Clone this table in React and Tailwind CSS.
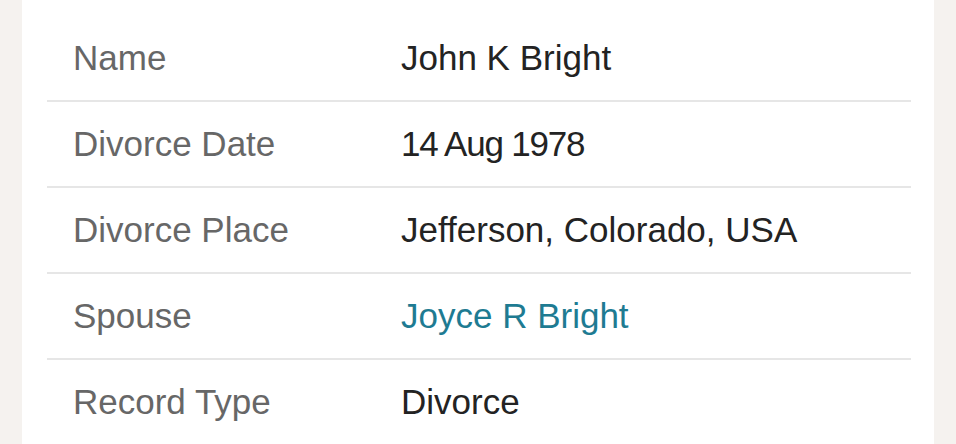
const rows = [
  { label: "Name", value: "John K Bright" },
  { label: "Divorce Date", value: "14 Aug 1978", tight: true },
  { label: "Divorce Place", value: "Jefferson, Colorado, USA" },
  { label: "Spouse", value: "Joyce R Bright", link: true },
  { label: "Record Type", value: "Divorce" },
];

export default function App() {
  return (
    <div className="flex h-[444px] w-full overflow-hidden bg-[#f5f2ef] px-[22px] font-['Liberation_Sans',Arial,sans-serif]">
      <div className="flex-1 bg-white pl-[25px] pr-[23px] pt-[16px]">
        {rows.map((row) => (
          <div key={row.label} className="flex h-[86px] shrink-0 items-center border-b-2 border-[#e6e6e6]">
            <div className="w-[354px] shrink-0 pl-[26px] text-[35px] text-[#676767]">{row.label}</div>
            <div
              className={
                row.link
                  ? "text-[35px] text-[#1e7b92]"
                  : row.tight
                    ? "text-[35px] tracking-[-1.2px] text-[#232323]"
                    : "text-[35px] text-[#232323]"
              }
            >
              {row.value}
            </div>
          </div>
        ))}
      </div>
    </div>
  );
}
